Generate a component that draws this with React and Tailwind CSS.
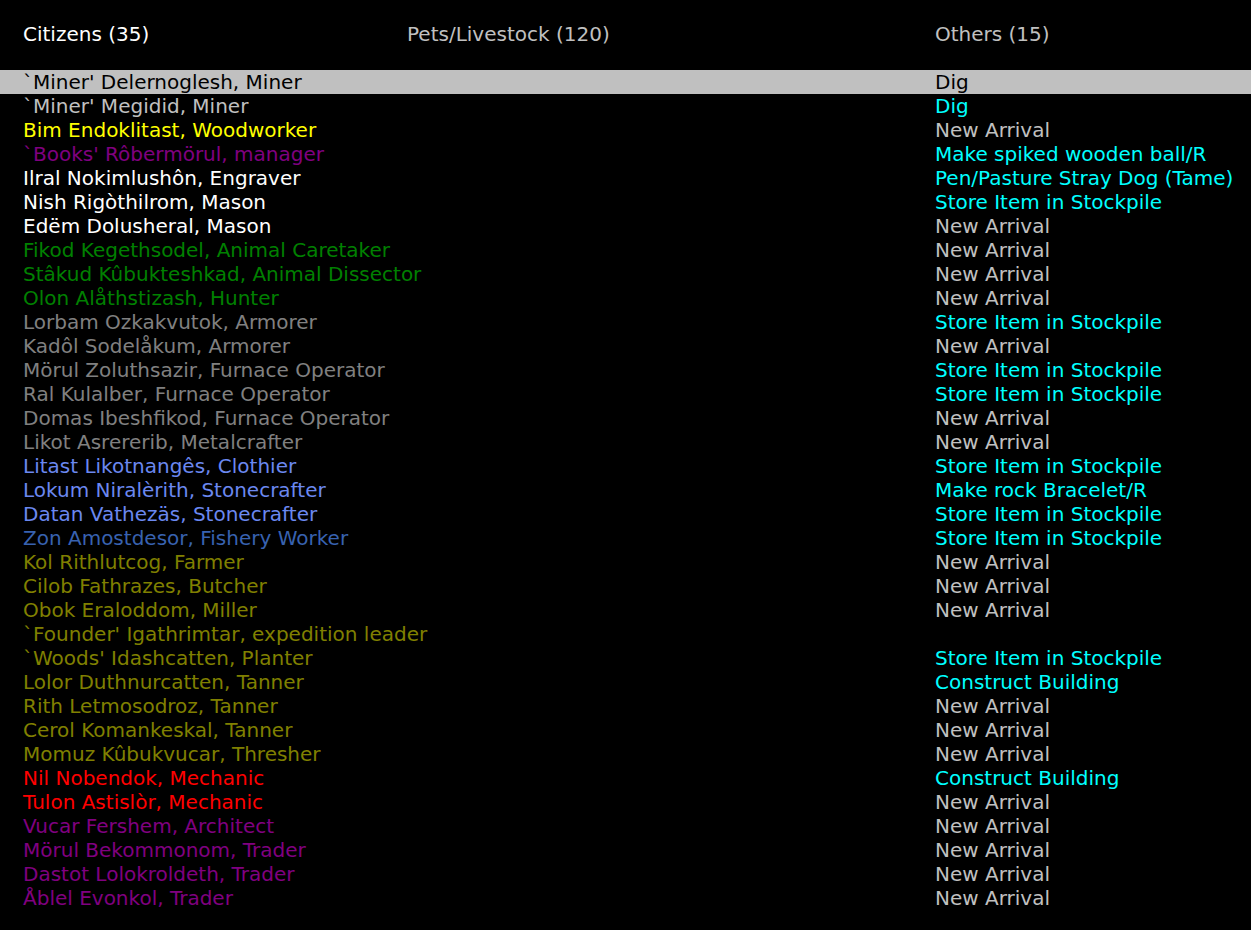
import React from "react";

const rows = [
  ["`Miner' Delernoglesh, Miner", "#000000", "Dig", "#000000", true],
  ["`Miner' Megidid, Miner", "#c0c0c0", "Dig", "#00ffff"],
  ["Bim Endoklitast, Woodworker", "#ffff00", "New Arrival", "#c0c0c0"],
  ["`Books' Rôbermörul, manager", "#800080", "Make spiked wooden ball/R", "#00ffff"],
  ["Ilral Nokimlushôn, Engraver", "#ffffff", "Pen/Pasture Stray Dog (Tame)", "#00ffff"],
  ["Nish Rigòthilrom, Mason", "#ffffff", "Store Item in Stockpile", "#00ffff"],
  ["Edëm Dolusheral, Mason", "#ffffff", "New Arrival", "#c0c0c0"],
  ["Fikod Kegethsodel, Animal Caretaker", "#008000", "New Arrival", "#c0c0c0"],
  ["Stâkud Kûbukteshkad, Animal Dissector", "#008000", "New Arrival", "#c0c0c0"],
  ["Olon Alåthstizash, Hunter", "#008000", "New Arrival", "#c0c0c0"],
  ["Lorbam Ozkakvutok, Armorer", "#808080", "Store Item in Stockpile", "#00ffff"],
  ["Kadôl Sodelåkum, Armorer", "#808080", "New Arrival", "#c0c0c0"],
  ["Mörul Zoluthsazir, Furnace Operator", "#808080", "Store Item in Stockpile", "#00ffff"],
  ["Ral Kulalber, Furnace Operator", "#808080", "Store Item in Stockpile", "#00ffff"],
  ["Domas Ibeshfikod, Furnace Operator", "#808080", "New Arrival", "#c0c0c0"],
  ["Likot Asrererib, Metalcrafter", "#808080", "New Arrival", "#c0c0c0"],
  ["Litast Likotnangês, Clothier", "#6b88f0", "Store Item in Stockpile", "#00ffff"],
  ["Lokum Niralèrith, Stonecrafter", "#6b88f0", "Make rock Bracelet/R", "#00ffff"],
  ["Datan Vathezäs, Stonecrafter", "#6b88f0", "Store Item in Stockpile", "#00ffff"],
  ["Zon Amostdesor, Fishery Worker", "#3862b0", "Store Item in Stockpile", "#00ffff"],
  ["Kol Rithlutcog, Farmer", "#808000", "New Arrival", "#c0c0c0"],
  ["Cilob Fathrazes, Butcher", "#808000", "New Arrival", "#c0c0c0"],
  ["Obok Eraloddom, Miller", "#808000", "New Arrival", "#c0c0c0"],
  ["`Founder' Igathrimtar, expedition leader", "#808000", "", "#c0c0c0"],
  ["`Woods' Idashcatten, Planter", "#808000", "Store Item in Stockpile", "#00ffff"],
  ["Lolor Duthnurcatten, Tanner", "#808000", "Construct Building", "#00ffff"],
  ["Rith Letmosodroz, Tanner", "#808000", "New Arrival", "#c0c0c0"],
  ["Cerol Komankeskal, Tanner", "#808000", "New Arrival", "#c0c0c0"],
  ["Momuz Kûbukvucar, Thresher", "#808000", "New Arrival", "#c0c0c0"],
  ["Nil Nobendok, Mechanic", "#ff0000", "Construct Building", "#00ffff"],
  ["Tulon Astislòr, Mechanic", "#ff0000", "New Arrival", "#c0c0c0"],
  ["Vucar Fershem, Architect", "#800080", "New Arrival", "#c0c0c0"],
  ["Mörul Bekommonom, Trader", "#800080", "New Arrival", "#c0c0c0"],
  ["Dastot Lolokroldeth, Trader", "#800080", "New Arrival", "#c0c0c0"],
  ["Åblel Evonkol, Trader", "#800080", "New Arrival", "#c0c0c0"],
];

export default function App() {
  return (
    <div className="min-h-[930px] w-full bg-black font-['DejaVu_Sans',sans-serif] text-[20px] leading-[24px]">
      <div className="flex h-[70px] pt-[22px] pl-[23px]">
        <div className="w-[384px] text-white">Citizens (35)</div>
        <div className="w-[528px] text-[#c0c0c0]">Pets/Livestock (120)</div>
        <div className="text-[#c0c0c0]">Others (15)</div>
      </div>
      <div className="flex flex-col">
        {rows.map(([name, nameColor, job, jobColor, selected], i) => (
          <div
            key={i}
            className={`flex h-[24px] pl-[23px] whitespace-nowrap ${selected ? "bg-[#c0c0c0]" : ""}`}
          >
            <div className="w-[912px]" style={{ color: nameColor }}>
              {name}
            </div>
            <div style={{ color: jobColor }}>{job}</div>
          </div>
        ))}
      </div>
    </div>
  );
}
